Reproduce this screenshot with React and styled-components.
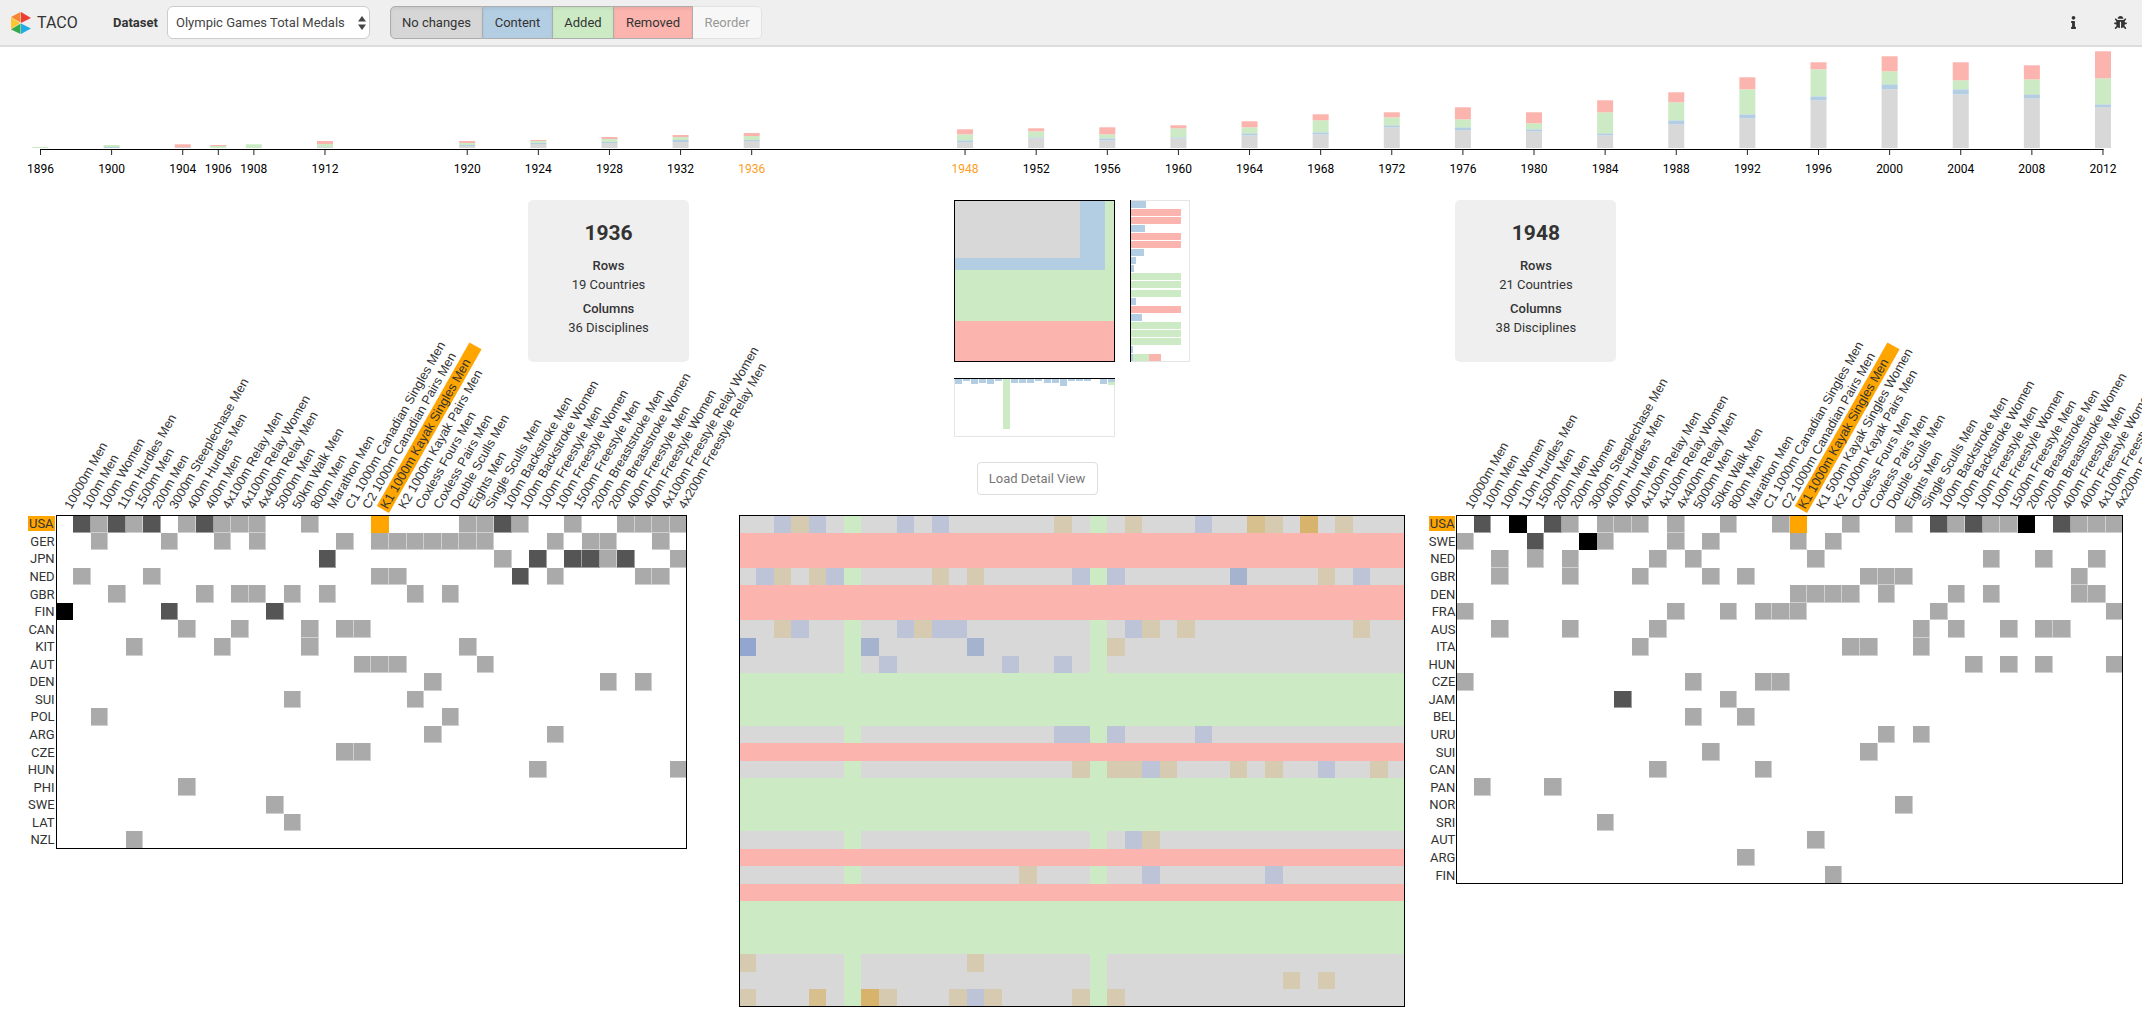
import React from "react";
import styled, { createGlobalStyle } from "styled-components";
import { FaInfo, FaBug } from "react-icons/fa";

const GRAY = "#d8d8d8";
const BLUE = "#b3cde3";
const GREEN = "#ccebc5";
const RED = "#fbb4ae";
const ORANGE = "#ffa500";

const CELL_W = 17.55;
const CELL_H = 17.57;

const GlobalStyle = createGlobalStyle`
  html, body {
    margin: 0;
    padding: 0;
    overflow: hidden;
    background: #fff;
    font-family: Roboto, "Liberation Sans", sans-serif;
    color: #333;
  }
`;

const Header = styled.header`
  height: 45px;
  display: flex;
  align-items: center;
  background: #efefef;
  border-bottom: 2px solid #ddd;
  padding-left: 11px;
`;

const Brand = styled.div`
  display: flex;
  align-items: center;
  gap: 6px;
  width: 102px;
  font-size: 16px;
  color: #333;
`;

const FieldLabel = styled.label`
  font-size: 13px;
  font-weight: 700;
  width: 54px;
`;

const SelectWrap = styled.div`
  position: relative;
  width: 203px;
  height: 33px;
  margin-right: 20px;
`;

const Select = styled.select`
  appearance: none;
  box-sizing: border-box;
  width: 100%;
  height: 100%;
  padding: 0 8px;
  font: 13px Roboto, sans-serif;
  color: #444;
  background: #fff;
  border: 1px solid #ccc;
  border-radius: 6px;
`;

const SelectArrows = styled.svg`
  position: absolute;
  right: 4px;
  top: 10px;
`;

const ButtonGroup = styled.div`
  display: flex;
  height: 33px;
`;

const ToggleButton = styled.button`
  box-sizing: border-box;
  width: ${(p) => p.$width}px;
  height: 33px;
  padding: 0;
  font: 13px Roboto, sans-serif;
  color: ${(p) => (p.$off ? "#999" : "#333")};
  background: ${(p) => p.$color};
  border: 1px solid ${(p) => (p.$off ? "#e2e2e2" : "#adadad")};
  border-left-width: ${(p) => (p.$first ? 1 : 0)}px;
  border-radius: ${(p) => (p.$first ? "5px 0 0 5px" : p.$off ? "0 5px 5px 0" : "0")};
  box-shadow: ${(p) => (p.$off ? "none" : "inset 0 2px 3px rgba(0, 0, 0, 0.06)")};
`;

const HeaderIcons = styled.div`
  display: flex;
  align-items: center;
  gap: 34px;
  margin-left: auto;
  padding-right: 15px;
  font-size: 13px;
  color: #333;
`;

const Timeline = styled.svg`
  display: block;
  width: 2142px;
  height: 153px;
`;

const Main = styled.main`
  display: grid;
  grid-template-columns: 738px 668px 1fr;
  align-items: start;
`;

const SidePanel = styled.section`
  display: flex;
  flex-direction: column;
  align-items: ${(p) => (p.$right ? "flex-start" : "flex-end")};
  padding: ${(p) => (p.$right ? "0 0 0 22.4px" : "0 49px 0 0")};
`;

const InfoCard = styled.div`
  box-sizing: border-box;
  width: 161px;
  height: 162px;
  margin-left: ${(p) => (p.$right ? 27 : 0)}px;
  padding-top: 21px;
  text-align: center;
  background: #efefef;
  border-radius: 5px;
`;

const CardTitle = styled.h2`
  margin: 0 0 12px;
  font-size: 21px;
  line-height: 24px;
  font-weight: 700;
  color: #333;
`;

const CardLabel = styled.div`
  margin-top: 6px;
  font-size: 13px;
  line-height: 18px;
  font-weight: 500;
  color: #333;
`;

const CardValue = styled.div`
  margin-top: 1px;
  font-size: 13px;
  line-height: 18px;
  color: #333;
`;

const MatrixBlock = styled.div`
  margin-right: ${(p) => (p.$right ? 0 : 1.7)}px;
`;

const ColHeader = styled.div`
  display: grid;
  grid-template-columns: repeat(${(p) => p.$cols}, ${CELL_W}px);
  height: 151px;
  margin: 0 0 2px 28px;
  align-items: end;
`;

const ColLabel = styled.div`
  box-sizing: border-box;
  width: 188px;
  height: 14px;
  margin-left: ${CELL_W}px;
  padding-left: 2px;
  font: 12.7px/14px "Liberation Sans", Arial, sans-serif;
  color: #333;
  white-space: nowrap;
  transform-origin: 0 100%;
  transform: rotate(-60.5deg);
  background: ${(p) => (p.$active ? ORANGE : "transparent")};
`;

const MatrixRow = styled.div`
  display: flex;
`;

const RowLabels = styled.div`
  width: 28px;
  display: grid;
  grid-auto-rows: ${CELL_H}px;
`;

const RowLabel = styled.div`
  display: flex;
  align-items: center;
  justify-content: flex-end;
  padding-right: 2px;
  font-size: 13px;
`;

const RowLabelText = styled.span`
  line-height: 15px;
  padding: 0 ${(p) => (p.$active ? 1 : 0)}px;
  background: ${(p) => (p.$active ? ORANGE : "transparent")};
`;

const Grid = styled.div`
  display: grid;
  grid-template-columns: repeat(${(p) => p.$cols}, ${CELL_W}px);
  grid-auto-rows: ${CELL_H}px;
  outline: 1px solid #000;
  outline-offset: -1px;
  background: #fff;
`;

const Cell = styled.div`
  background: ${(p) => p.$bg};
  box-shadow: ${(p) => (p.$edge ? "inset -1px -1px 0 rgba(255, 255, 255, 0.45)" : "none")};
`;

const CenterPanel = styled.section`
  display: flex;
  flex-direction: column;
  align-items: center;
`;

const Overview = styled.div`
  display: grid;
  grid-template-columns: 161px 60px;
  column-gap: 15px;
  row-gap: 16px;
`;

const ChartFrame = styled.svg`
  display: block;
  width: ${(p) => p.$w}px;
  height: ${(p) => p.$h}px;
`;

const LoadButton = styled.button`
  grid-column: 1;
  justify-self: center;
  width: 121px;
  height: 33px;
  margin: 9px 0 20px 5px;
  padding: 0;
  font: 13px Roboto, sans-serif;
  color: #777;
  background: #fff;
  border: 1px solid #ddd;
  border-radius: 4px;
`;

const YEARS = [
  [1896, 0, 0, 1, 0],
  [1900, 0, 1, 2, 0],
  [1904, 0, 0.7, 0, 3],
  [1906, 0, 0, 2, 1],
  [1908, 0, 0, 3.7, 0],
  [1912, 1, 0, 3, 3],
  [1920, 2, 1, 2, 2],
  [1924, 4, 1, 2, 1],
  [1928, 5, 1, 3, 2],
  [1932, 6, 2, 3, 2],
  [1936, 7, 1, 4, 3],
  [1948, 5.7, 2, 6, 5],
  [1952, 9.7, 1, 6, 3],
  [1956, 7.7, 2, 4, 7],
  [1960, 9.7, 1, 9, 3],
  [1964, 12.7, 2, 6, 6],
  [1968, 13.7, 2, 12, 6],
  [1972, 20.7, 2, 8, 5],
  [1976, 17.7, 3, 8, 12],
  [1980, 16.7, 2, 6, 11],
  [1984, 12.7, 2, 21, 12],
  [1988, 23.7, 4, 18, 10],
  [1992, 29.7, 4, 25, 12],
  [1996, 47.7, 4, 27, 7],
  [2000, 58.7, 5, 13, 15],
  [2004, 53.7, 5, 9, 18],
  [2008, 49.7, 4, 15, 14],
  [2012, 40.7, 3, 26, 27],
];

const yearX = (year) => 40.5 + (year - 1896) * 17.78;

const COMMON_A = [
  "10000m Men", "100m Men", "100m Women", "110m Hurdles Men", "1500m Men", "200m Men",
];
const COMMON_B = [
  "3000m Steeplechase Men", "400m Hurdles Men", "400m Men", "4x100m Relay Men",
  "4x100m Relay Women", "4x400m Relay Men", "5000m Men", "50km Walk Men", "800m Men",
  "Marathon Men", "C1 1000m Canadian Singles Men", "C2 1000m Canadian Pairs Men",
  "K1 1000m Kayak Singles Men",
];
const COMMON_C = [
  "K2 1000m Kayak Pairs Men", "Coxless Fours Men", "Coxless Pairs Men", "Double Sculls Men",
  "Eights Men", "Single Sculls Men", "100m Backstroke Men", "100m Backstroke Women",
  "100m Freestyle Men", "100m Freestyle Women", "1500m Freestyle Men", "200m Breaststroke Men",
  "200m Breaststroke Women", "400m Freestyle Men", "400m Freestyle Women",
  "4x100m Freestyle Relay Women", "4x200m Freestyle Relay Men",
];

const LEFT_COLS = [...COMMON_A, ...COMMON_B, ...COMMON_C];
const RIGHT_COLS = [
  ...COMMON_A, "200m Women", ...COMMON_B, "K1 500m Kayak Singles Women", ...COMMON_C,
];

// column index + tone letter: (none) = one medal, d = dark, k = black, o = selected
const LEFT_ROWS = [
  ["USA", "1d 2 3d 4 5d 7 8d 9 10 11 14 18o 23 24 25d 26 29 32 33 34 35"],
  ["GER", "2 6 9 11 16 18 19 20 21 22 23 24 28 30 31 34"],
  ["JPN", "15d 25 27d 29d 30d 31 32d 35"],
  ["NED", "1 5 18 19 26d 28 33 34"],
  ["GBR", "3 8 10 11 13 15 20 22"],
  ["FIN", "0k 6d 12d"],
  ["CAN", "7 10 14 16 17"],
  ["KIT", "4 9 14 23"],
  ["AUT", "17 18 19 24"],
  ["DEN", "21 31 33"],
  ["SUI", "13 20"],
  ["POL", "2 22"],
  ["ARG", "21 28"],
  ["CZE", "16 17"],
  ["HUN", "27 35"],
  ["PHI", "7"],
  ["SWE", "12"],
  ["LAT", "13"],
  ["NZL", "4"],
];

const RIGHT_ROWS = [
  ["USA", "1d 3k 5d 6 8 9 10 12 15 18 19o 22 25 27d 28 29d 30 31 32k 34d 35 36 37"],
  ["SWE", "0 4d 7k 8 12 14 19 21"],
  ["NED", "2 4 6 11 13 20 30 33 36"],
  ["GBR", "2 6 10 14 16 23 24 25 35"],
  ["DEN", "19 20 21 22 24 28 30 35 36"],
  ["FRA", "0 12 15 17 18 19 27 37"],
  ["AUS", "2 6 11 26 28 31 33 34"],
  ["ITA", "10 22 23 26"],
  ["HUN", "29 31 33 37"],
  ["CZE", "0 13 17 18"],
  ["JAM", "9d 15"],
  ["BEL", "13 16"],
  ["URU", "24 26"],
  ["SUI", "14 23"],
  ["CAN", "11 17"],
  ["PAN", "1 5"],
  ["NOR", "25"],
  ["SRI", "8"],
  ["AUT", "20"],
  ["ARG", "16"],
  ["FIN", "21"],
];

const MEDAL_TONES = { "": "#aaaaaa", d: "#555555", k: "#000000", o: ORANGE };

// t/T/U = removed-ish tans, b/B/C = added-ish blues
const DIFF_TONES = {
  t: "#d6cbb0",
  T: "#d8bf8e",
  U: "#d7b36b",
  b: "#bdc4d7",
  B: "#a6b3cf",
  C: "#92a6cf",
};

const DIFF_ROWS = [
  "2b 3t 4b 9b 11b 18t 22t 26b 29T 30t 32U 34t",
  "R",
  "R",
  "1b 2t 4t 5b 11t 13t 19b 21b 28B 33t 35b",
  "R",
  "R",
  "2t 3b 9b 10t 11b 12b 22b 23t 25t 35t",
  "0C 7B 13B 21t",
  "8b 15b 18b",
  "G",
  "G",
  "G",
  "18b 19b 21b 26b",
  "R",
  "19t 21t 22t 23b 24t 28t 30t 33b 36t",
  "G",
  "G",
  "G",
  "22b 23t",
  "R",
  "16t 23b 30b",
  "R",
  "G",
  "G",
  "G",
  "0t 13t",
  "31t 33t",
  "0t 4T 7U 8t 12t 13b 14t 19t 21t",
];

const parseMedals = (spec) => {
  const map = {};
  spec.split(" ").forEach((item) => {
    const m = item.match(/^(\d+)([a-z]?)$/);
    map[m[1]] = m[2];
  });
  return map;
};

const parseDiff = (spec) => {
  const map = {};
  spec.split(" ").forEach((item) => {
    const m = item.match(/^(\d+)([a-zA-Z])$/);
    if (m) map[m[1]] = DIFF_TONES[m[2]];
  });
  return map;
};

const SIDE_HIST = [
  [1, 15, BLUE], [9, 50, RED], [17, 50, RED], [25, 14, BLUE], [33, 50, RED], [41, 50, RED],
  [49, 13, BLUE], [57, 5, BLUE], [65, 3, BLUE], [73, 50, GREEN], [81, 50, GREEN], [90, 50, GREEN],
  [98, 5, BLUE], [106, 50, RED], [114, 11, BLUE], [122, 50, GREEN], [130, 50, GREEN], [138, 50, GREEN],
  [146, 2, BLUE],
];

// x, blue height, green height
const BOTTOM_HIST = [
  [1, 5, 0], [9, 2, 0], [17, 5, 0], [25, 4, 0], [33, 5, 0], [41, 2, 0], [49, 0, 50],
  [57, 4, 0], [65, 4, 0], [73, 4, 0], [81, 2, 0], [90, 4, 0], [98, 4, 0], [106, 7, 0],
  [114, 2, 0], [122, 2, 0], [130, 2, 0], [146, 5, 0], [154, 3, 3],
];

function Logo() {
  return (
    <svg width="20" height="22" viewBox="0 0 20 22">
      <polygon points="0,5 9.5,0 9.5,10.5 5,8" fill="#f58634" />
      <polygon points="10,0 20,6 10,11" fill="#ee3f37" />
      <polygon points="0,5.5 9,11 0,17" fill="#fdc52f" />
      <polygon points="0,17.5 9.5,11.5 9.5,22" fill="#35a949" />
      <polygon points="10,11.5 20,16.5 10,22" fill="#1eaee4" />
    </svg>
  );
}

function TimelineChart() {
  return (
    <Timeline viewBox="0 0 2142 153">
      {YEARS.map(([year, gray, blue, green, red]) => {
        const x = yearX(year);
        const parts = [
          [gray, GRAY],
          [blue, BLUE],
          [green, GREEN],
          [red, RED],
        ];
        let top = 101;
        const selected = year === 1936 || year === 1948;
        return (
          <g key={year}>
            {parts.map(([h, fill]) => {
              top -= h;
              return h > 0 ? <rect key={fill} x={x - 8} y={top} width="16" height={h} fill={fill} /> : null;
            })}
            <line x1={x} x2={x} y1="102" y2="108" stroke="#222" />
            <text
              x={x}
              y="126"
              textAnchor="middle"
              fontFamily="Roboto, sans-serif"
              fontSize="12"
              fill={selected ? "#ff9d1e" : "#000"}
            >
              {year}
            </text>
          </g>
        );
      })}
      <line x1="40" x2={yearX(2012) + 0.5} y1="102.5" y2="102.5" stroke="#000" />
    </Timeline>
  );
}

function YearCard({ year, rows, cols, right }) {
  return (
    <InfoCard $right={right}>
      <CardTitle>{year}</CardTitle>
      <CardLabel>Rows</CardLabel>
      <CardValue>{rows} Countries</CardValue>
      <CardLabel>Columns</CardLabel>
      <CardValue>{cols} Disciplines</CardValue>
    </InfoCard>
  );
}

function MedalMatrix({ cols, rows, right }) {
  return (
    <MatrixBlock $right={right}>
      <ColHeader $cols={cols.length}>
        {cols.map((name) => (
          <ColLabel key={name} $active={name.startsWith("K1 1000m")}>
            {name}
          </ColLabel>
        ))}
      </ColHeader>
      <MatrixRow>
        <RowLabels>
          {rows.map(([name]) => (
            <RowLabel key={name}>
              <RowLabelText $active={name === "USA"}>{name}</RowLabelText>
            </RowLabel>
          ))}
        </RowLabels>
        <Grid $cols={cols.length}>
          {rows.map(([name, spec]) => {
            const medals = parseMedals(spec);
            return cols.map((col, i) => {
              const tone = medals[i];
              return tone === undefined ? (
                <Cell key={name + i} $bg="#fff" />
              ) : (
                <Cell key={name + i} $bg={MEDAL_TONES[tone]} $edge={tone !== "o" && tone !== "k"} />
              );
            });
          })}
        </Grid>
      </MatrixRow>
    </MatrixBlock>
  );
}

function DiffMatrix() {
  const cols = Array.from({ length: 38 }, (_, i) => i);
  return (
    <Grid $cols={38}>
      {DIFF_ROWS.map((spec, r) => {
        if (spec === "R" || spec === "G") {
          return cols.map((c) => <Cell key={r + "-" + c} $bg={spec === "R" ? RED : GREEN} />);
        }
        const tints = parseDiff(spec);
        return cols.map((c) => {
          const added = c === 6 || c === 20;
          return <Cell key={r + "-" + c} $bg={added ? GREEN : tints[c] || GRAY} />;
        });
      })}
    </Grid>
  );
}

function OverviewCharts() {
  return (
    <Overview>
      <ChartFrame $w={161} $h={162} viewBox="0 0 161 162">
        <rect width="161" height="162" fill={RED} />
        <rect width="161" height="121" fill={GREEN} />
        <rect width="151" height="70" fill={BLUE} />
        <rect width="126" height="58" fill={GRAY} />
        <rect x="0.5" y="0.5" width="160" height="161" fill="none" stroke="#000" />
      </ChartFrame>
      <ChartFrame $w={60} $h={162} viewBox="0 0 60 162">
        <rect x="0.5" y="0.5" width="59" height="161" fill="none" stroke="#e5e5e5" />
        {SIDE_HIST.map(([y, w, fill]) => (
          <rect key={y} x="1" y={y} width={w} height="7" fill={fill} />
        ))}
        <rect x="1" y="154" width="2" height="7" fill={BLUE} />
        <rect x="3" y="154" width="16" height="7" fill={GREEN} />
        <rect x="19" y="154" width="12" height="7" fill={RED} />
        <line x1="0.5" x2="0.5" y1="0" y2="162" stroke="#000" />
      </ChartFrame>
      <ChartFrame $w={161} $h={59} viewBox="0 0 161 59">
        <rect x="0.5" y="0.5" width="160" height="58" fill="none" stroke="#e5e5e5" />
        {BOTTOM_HIST.map(([x, blue, green]) => (
          <g key={x}>
            <rect x={x} y="1" width="7" height={blue} fill={BLUE} />
            <rect x={x} y={1 + blue} width="7" height={green} fill={GREEN} />
          </g>
        ))}
        <line x1="0" x2="161" y1="0.5" y2="0.5" stroke="#000" />
      </ChartFrame>
      <LoadButton>Load Detail View</LoadButton>
    </Overview>
  );
}

export default function App() {
  return (
    <>
      <GlobalStyle />
      <Header>
        <Brand>
          <Logo />
          TACO
        </Brand>
        <FieldLabel>Dataset</FieldLabel>
        <SelectWrap>
          <Select defaultValue="Olympic Games Total Medals">
            <option>Olympic Games Total Medals</option>
          </Select>
          <SelectArrows width="8" height="14" viewBox="0 0 8 14">
            <polygon points="4,0 8,5.5 0,5.5" fill="#444" />
            <polygon points="4,14 8,8.5 0,8.5" fill="#444" />
          </SelectArrows>
        </SelectWrap>
        <ButtonGroup>
          <ToggleButton $first $width={93} $color="#d6d6d6">No changes</ToggleButton>
          <ToggleButton $width={70} $color={BLUE}>Content</ToggleButton>
          <ToggleButton $width={61} $color={GREEN}>Added</ToggleButton>
          <ToggleButton $width={79} $color={RED}>Removed</ToggleButton>
          <ToggleButton $off $width={69} $color="#f7f7f7">Reorder</ToggleButton>
        </ButtonGroup>
        <HeaderIcons>
          <FaInfo />
          <FaBug />
        </HeaderIcons>
      </Header>
      <TimelineChart />
      <Main>
        <SidePanel>
          <YearCard year={1936} rows={19} cols={36} />
          <MedalMatrix cols={LEFT_COLS} rows={LEFT_ROWS} />
        </SidePanel>
        <CenterPanel>
          <OverviewCharts />
          <DiffMatrix />
        </CenterPanel>
        <SidePanel $right>
          <YearCard year={1948} rows={21} cols={38} right />
          <MedalMatrix cols={RIGHT_COLS} rows={RIGHT_ROWS} right />
        </SidePanel>
      </Main>
    </>
  );
}
